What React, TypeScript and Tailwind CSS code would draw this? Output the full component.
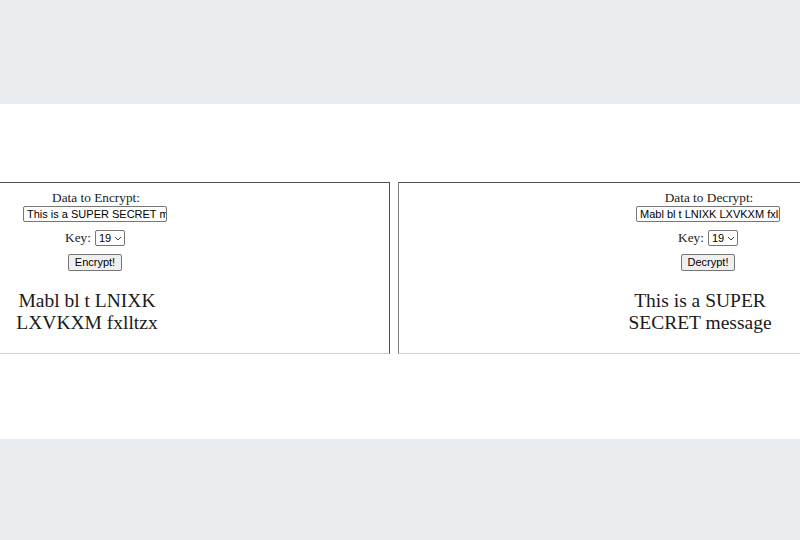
const serif = "font-['Liberation_Serif','Times_New_Roman',serif]";
const sans = "font-['Liberation_Sans',Arial,sans-serif]";

function Chevron() {
  return (
    <svg width="8" height="5" viewBox="0 0 8 5" className="ml-[3px]">
      <path d="M1 1 L4 4 L7 1" fill="none" stroke="#444" strokeWidth="1" />
    </svg>
  );
}

function CipherForm({ label, value, action, result }: { label: string; value: string; action: string; result: string }) {
  return (
    <div className="flex w-[190px] flex-col items-center text-center">
      <div className={`${serif} h-[16px] pl-[2px] text-[13.3px] leading-[16px] text-[#222]`}>{label}</div>
      <div className={`${sans} h-[16px] w-[144px] overflow-hidden whitespace-nowrap rounded-[2px] border border-[#767676] bg-white pl-[3px] text-left text-[11px] leading-[14px] text-black`}>
        {value}
      </div>
      <div className="mt-[8px] flex h-[16px] items-center gap-[4px]">
        <span className={`${serif} text-[13.3px] leading-[16px] text-[#222]`}>Key:</span>
        <div className={`${sans} flex h-[16px] w-[30px] items-center rounded-[2px] border border-[#767676] bg-white pl-[3px] text-[11px] leading-[14px] text-black`}>
          19
          <Chevron />
        </div>
      </div>
      <button className={`${sans} mt-[8px] h-[17px] rounded-[2px] border border-[#767676] bg-[#efefef] px-[6px] text-[11px] leading-[15px] text-black`}>
        {action}
      </button>
      <p className={`${serif} mt-[19px] w-full pr-[16px] text-[19.5px] leading-[22px] text-[#1a1a1a]`}>{result}</p>
    </div>
  );
}

export default function App() {
  return (
    <div className="flex h-[540px] w-[800px] flex-col overflow-hidden bg-white">
      <div className="h-[104px] bg-[#e9edf0]" />
      <div className="flex flex-1 items-start pt-[78px]">
        <div className="ml-[-10px] flex gap-[8px]">
          <div className="w-[400px] border border-t-[#4d4d4d] border-r-[#4d4d4d] border-b-[#cfcfcf] border-l-[#7a7a7a] pt-[7px] pb-[19px] pl-[9px]">
            <CipherForm
              label="Data to Encrypt:"
              value="This is a SUPER SECRET message"
              action="Encrypt!"
              result="Mabl bl t LNIXK LXVKXM fxlltzx"
            />
          </div>
          <div className="w-[420px] border border-t-[#4d4d4d] border-r-[#4d4d4d] border-b-[#cfcfcf] border-l-[#7a7a7a] pt-[7px] pb-[19px] pl-[214px]">
            <CipherForm
              label="Data to Decrypt:"
              value="Mabl bl t LNIXK LXVKXM fxlltzx"
              action="Decrypt!"
              result="This is a SUPER SECRET message"
            />
          </div>
        </div>
      </div>
      <div className="h-[101px] bg-[#e9edf0]" />
    </div>
  );
}
